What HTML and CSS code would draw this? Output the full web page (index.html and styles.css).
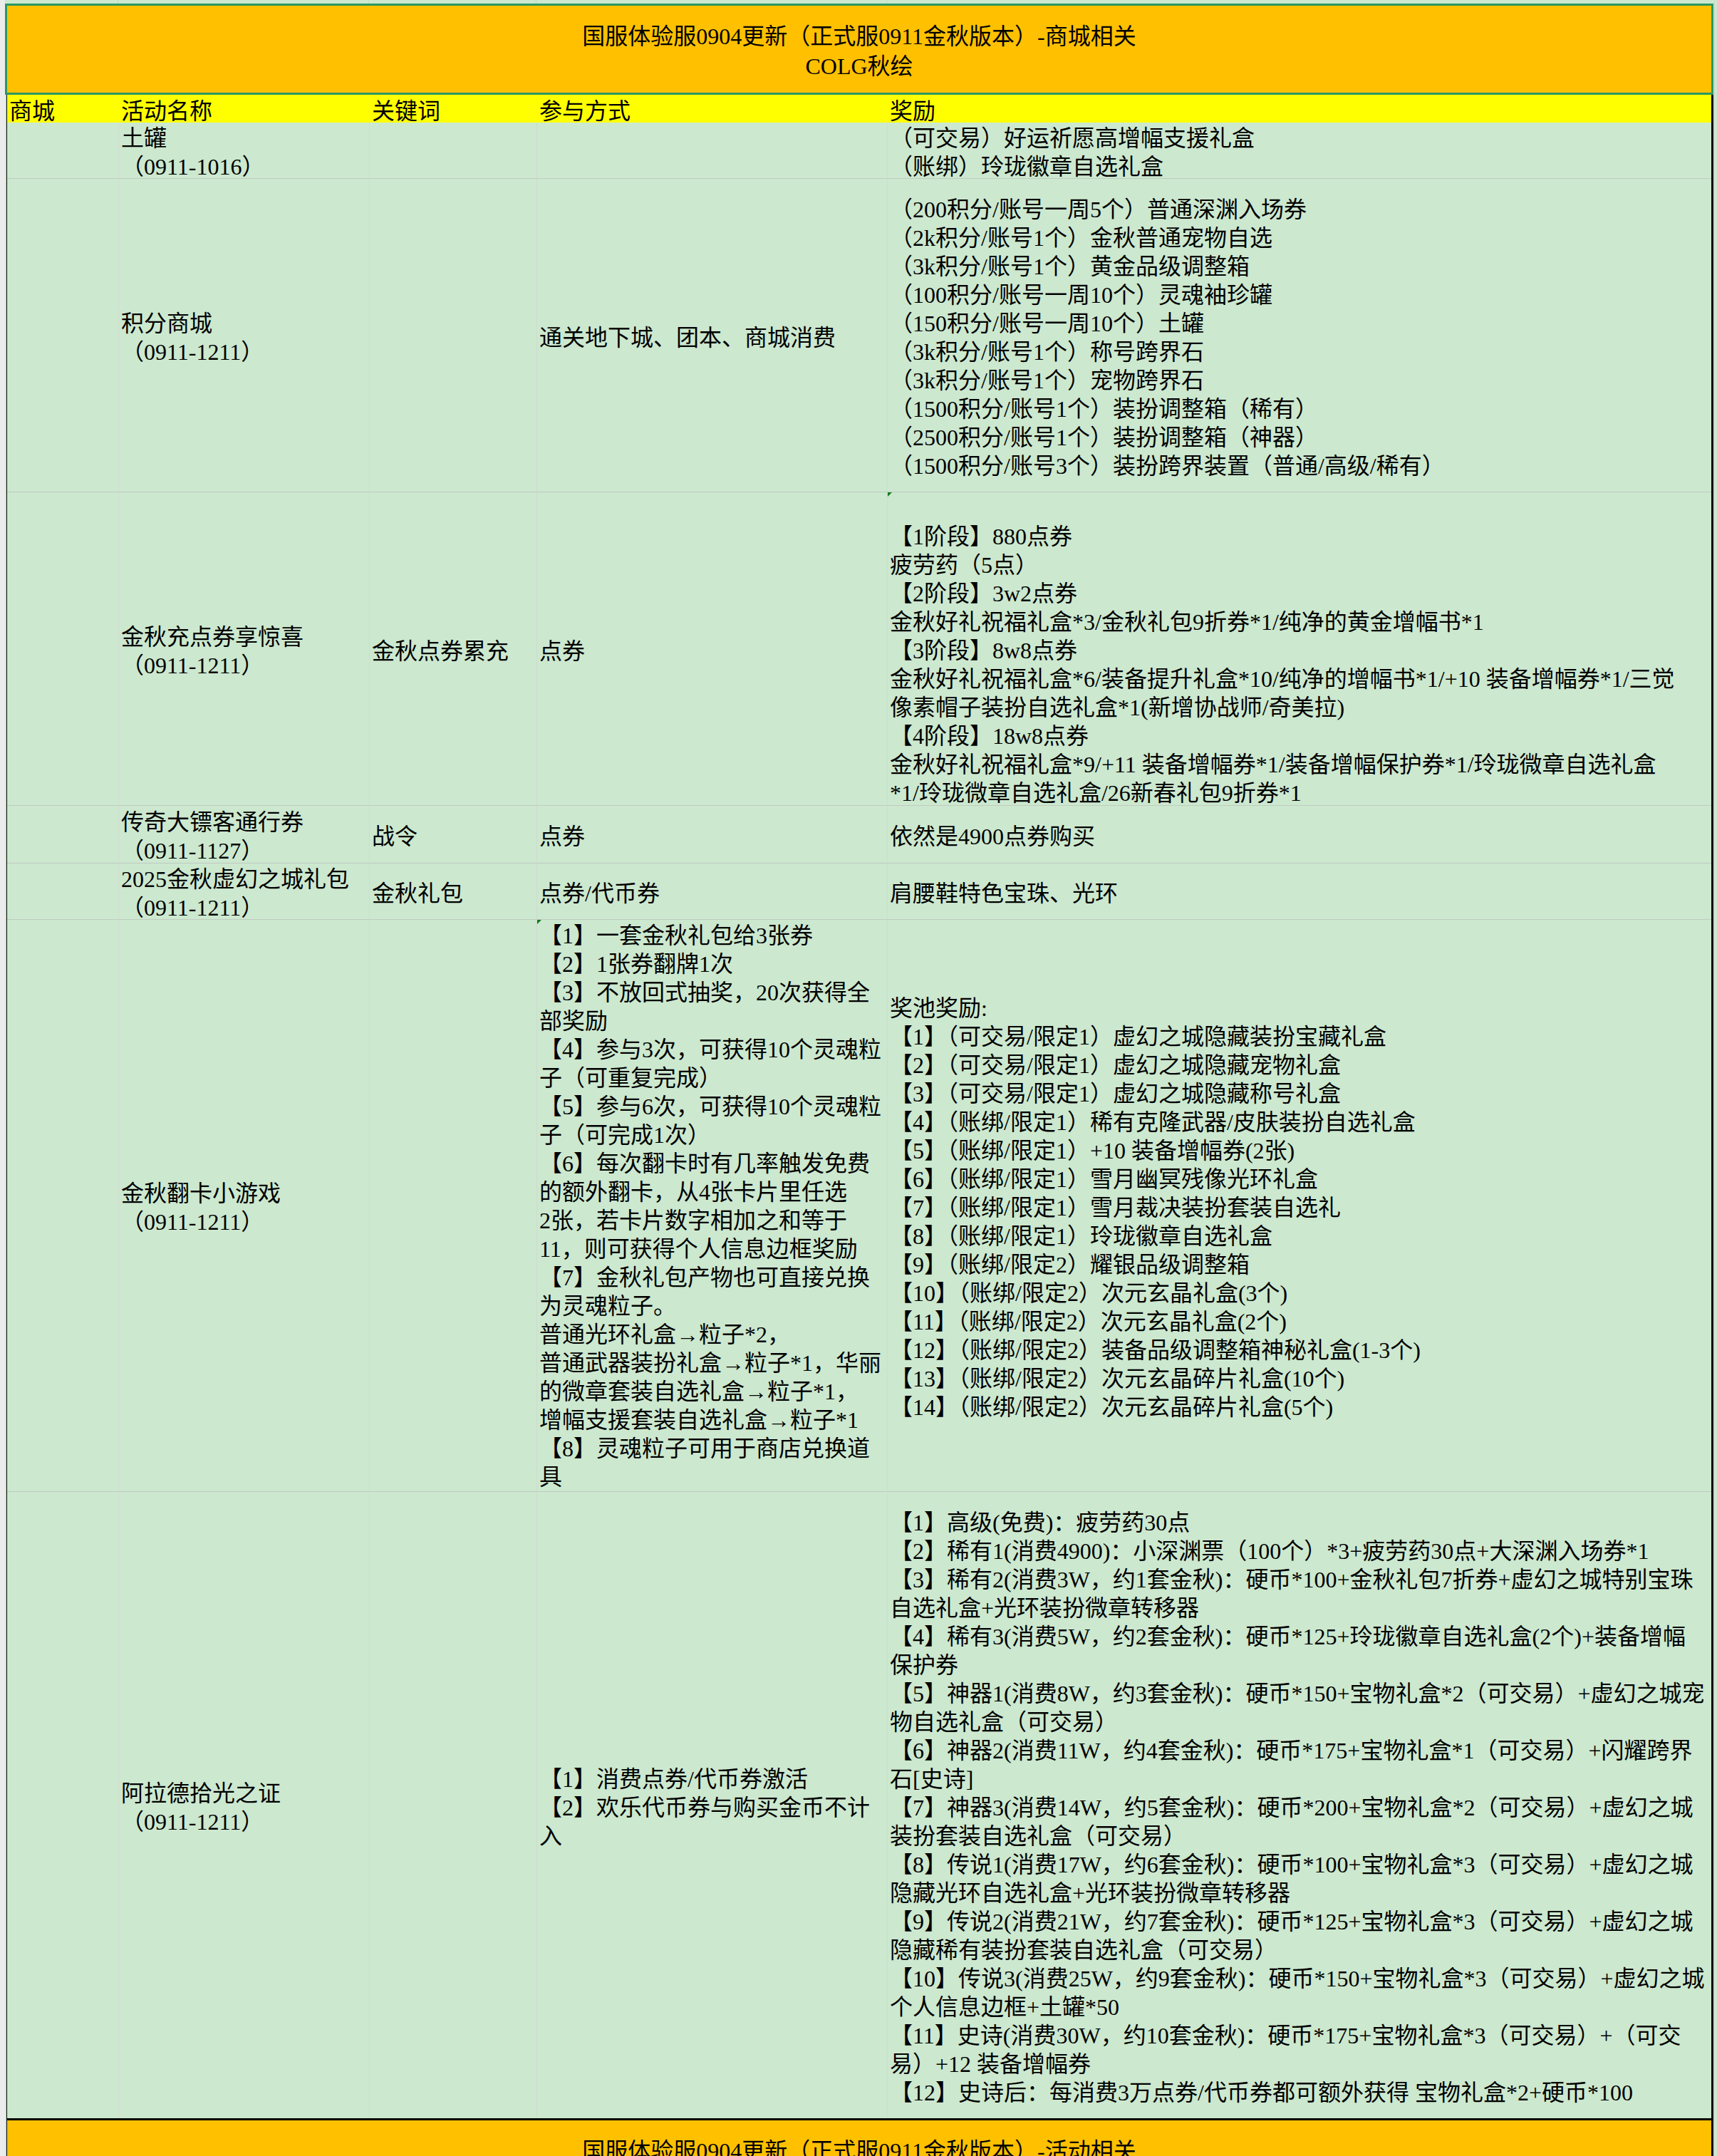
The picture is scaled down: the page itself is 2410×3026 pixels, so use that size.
FILE: index.html
```html
<!DOCTYPE html>
<html lang="zh-CN">
<head>
<meta charset="utf-8">
<title>商城相关</title>
<link rel="stylesheet" href="styles.css">
</head>
<body>
<div class="sheet">
  <div class="gutter"></div>
  <div class="main">
    <div class="topstrip">
      <div class="ts c1"></div><div class="ts c2"></div><div class="ts c3"></div><div class="ts c4"></div><div class="ts c5"></div>
    </div>
    <div class="banner">
      <div class="banner-text">国服体验服0904更新（正式服0911金秋版本）-商城相关<br>COLG秋绘</div>
    </div>
    <div class="table">
      <div class="grid">
        <div class="hd">商城</div>
        <div class="hd">活动名称</div>
        <div class="hd">关键词</div>
        <div class="hd">参与方式</div>
        <div class="hd">奖励</div>

        <div class="cell"></div>
        <div class="cell"><div>土罐<br>（0911-1016）</div></div>
        <div class="cell"></div>
        <div class="cell"></div>
        <div class="cell last"><div>（可交易）好运祈愿高增幅支援礼盒<br>（账绑）玲珑徽章自选礼盒</div></div>

        <div class="cell"></div>
        <div class="cell"><div>积分商城<br>（0911-1211）</div></div>
        <div class="cell"></div>
        <div class="cell"><div>通关地下城、团本、商城消费</div></div>
        <div class="cell last"><div>（200积分/账号一周5个）普通深渊入场券<br>（2k积分/账号1个）金秋普通宠物自选<br>（3k积分/账号1个）黄金品级调整箱<br>（100积分/账号一周10个）灵魂袖珍罐<br>（150积分/账号一周10个）土罐<br>（3k积分/账号1个）称号跨界石<br>（3k积分/账号1个）宠物跨界石<br>（1500积分/账号1个）装扮调整箱（稀有）<br>（2500积分/账号1个）装扮调整箱（神器）<br>（1500积分/账号3个）装扮跨界装置（普通/高级/稀有）</div></div>

        <div class="cell"></div>
        <div class="cell"><div>金秋充点券享惊喜<br>（0911-1211）</div></div>
        <div class="cell"><div>金秋点券累充</div></div>
        <div class="cell"><div>点券</div></div>
        <div class="cell last tall"><span class="flag"></span><div><br>【1阶段】880点券<br>疲劳药（5点）<br>【2阶段】3w2点券<br>金秋好礼祝福礼盒*3/金秋礼包9折券*1/纯净的黄金增幅书*1<br>【3阶段】8w8点券<br>金秋好礼祝福礼盒*6/装备提升礼盒*10/纯净的增幅书*1/+10 装备增幅券*1/三觉<br>像素帽子装扮自选礼盒*1(新增协战师/奇美拉)<br>【4阶段】18w8点券<br>金秋好礼祝福礼盒*9/+11 装备增幅券*1/装备增幅保护券*1/玲珑微章自选礼盒<br>*1/玲珑微章自选礼盒/26新春礼包9折券*1</div></div>

        <div class="cell"></div>
        <div class="cell"><div>传奇大镖客通行券<br>（0911-1127）</div></div>
        <div class="cell"><div>战令</div></div>
        <div class="cell"><div>点券</div></div>
        <div class="cell last"><div>依然是4900点券购买</div></div>

        <div class="cell"></div>
        <div class="cell"><div>2025金秋虚幻之城礼包<br>（0911-1211）</div></div>
        <div class="cell"><div>金秋礼包</div></div>
        <div class="cell"><div>点券/代币券</div></div>
        <div class="cell last"><div>肩腰鞋特色宝珠、光环</div></div>

        <div class="cell"></div>
        <div class="cell"><div>金秋翻卡小游戏<br>（0911-1211）</div></div>
        <div class="cell"></div>
        <div class="cell tall"><span class="flag"></span><div>【1】一套金秋礼包给3张券<br>【2】1张券翻牌1次<br>【3】不放回式抽奖，20次获得全<br>部奖励<br>【4】参与3次，可获得10个灵魂粒<br>子（可重复完成）<br>【5】参与6次，可获得10个灵魂粒<br>子（可完成1次）<br>【6】每次翻卡时有几率触发免费<br>的额外翻卡，从4张卡片里任选<br>2张，若卡片数字相加之和等于<br>11，则可获得个人信息边框奖励<br>【7】金秋礼包产物也可直接兑换<br>为灵魂粒子。<br>普通光环礼盒→粒子*2，<br>普通武器装扮礼盒→粒子*1，华丽<br>的微章套装自选礼盒→粒子*1，<br>增幅支援套装自选礼盒→粒子*1<br>【8】灵魂粒子可用于商店兑换道<br>具</div></div>
        <div class="cell last"><div>奖池奖励:<br>【1】（可交易/限定1）虚幻之城隐藏装扮宝藏礼盒<br>【2】（可交易/限定1）虚幻之城隐藏宠物礼盒<br>【3】（可交易/限定1）虚幻之城隐藏称号礼盒<br>【4】（账绑/限定1）稀有克隆武器/皮肤装扮自选礼盒<br>【5】（账绑/限定1）+10 装备增幅券(2张)<br>【6】（账绑/限定1）雪月幽冥残像光环礼盒<br>【7】（账绑/限定1）雪月裁决装扮套装自选礼<br>【8】（账绑/限定1）玲珑徽章自选礼盒<br>【9】（账绑/限定2）耀银品级调整箱<br>【10】（账绑/限定2）次元玄晶礼盒(3个)<br>【11】（账绑/限定2）次元玄晶礼盒(2个)<br>【12】（账绑/限定2）装备品级调整箱神秘礼盒(1-3个)<br>【13】（账绑/限定2）次元玄晶碎片礼盒(10个)<br>【14】（账绑/限定2）次元玄晶碎片礼盒(5个)</div></div>

        <div class="cell end"></div>
        <div class="cell end"><div>阿拉德拾光之证<br>（0911-1211）</div></div>
        <div class="cell end"></div>
        <div class="cell end"><div>【1】消费点券/代币券激活<br>【2】欢乐代币券与购买金币不计<br>入</div></div>
        <div class="cell end last"><div>【1】高级(免费)：疲劳药30点<br>【2】稀有1(消费4900)：小深渊票（100个）*3+疲劳药30点+大深渊入场券*1<br>【3】稀有2(消费3W，约1套金秋)：硬币*100+金秋礼包7折券+虚幻之城特别宝珠<br>自选礼盒+光环装扮微章转移器<br>【4】稀有3(消费5W，约2套金秋)：硬币*125+玲珑徽章自选礼盒(2个)+装备增幅<br>保护券<br>【5】神器1(消费8W，约3套金秋)：硬币*150+宝物礼盒*2（可交易）+虚幻之城宠<br>物自选礼盒（可交易）<br>【6】神器2(消费11W，约4套金秋)：硬币*175+宝物礼盒*1（可交易）+闪耀跨界<br>石[史诗]<br>【7】神器3(消费14W，约5套金秋)：硬币*200+宝物礼盒*2（可交易）+虚幻之城<br>装扮套装自选礼盒（可交易）<br>【8】传说1(消费17W，约6套金秋)：硬币*100+宝物礼盒*3（可交易）+虚幻之城<br>隐藏光环自选礼盒+光环装扮微章转移器<br>【9】传说2(消费21W，约7套金秋)：硬币*125+宝物礼盒*3（可交易）+虚幻之城<br>隐藏稀有装扮套装自选礼盒（可交易）<br>【10】传说3(消费25W，约9套金秋)：硬币*150+宝物礼盒*3（可交易）+虚幻之城<br>个人信息边框+土罐*50<br>【11】史诗(消费30W，约10套金秋)：硬币*175+宝物礼盒*3（可交易）+（可交<br>易）+12 装备增幅券<br>【12】史诗后：每消费3万点券/代币券都可额外获得 宝物礼盒*2+硬币*100</div></div>
      </div>
      <div class="banner2">
        <div class="banner-text">国服体验服0904更新（正式服0911金秋版本）-活动相关</div>
      </div>
    </div>
  </div>
  <div class="rstrip"></div>
</div>
</body>
</html>
```

FILE: styles.css
```css
html, body {
  margin: 0;
  padding: 0;
}
body {
  background: #cce8cf;
  font-family: "Liberation Serif", "Noto Sans CJK SC", serif;
  font-size: 32px;
  line-height: 40px;
  color: #000;
  overflow: hidden;
}
.sheet {
  display: flex;
  align-items: flex-start;
  width: 2410px;
  height: 3026px;
  overflow: hidden;
}
.gutter {
  width: 7px;
  height: 3026px;
  flex: none;
  background: #ececec;
}
.main {
  width: 2398px;
  flex: none;
  display: flex;
  flex-direction: column;
}
.rstrip {
  width: 5px;
  height: 3026px;
  flex: none;
  background: #cce8cf;
  border-left: 1px solid #c6d2c7;
  box-sizing: border-box;
  margin-left: 1px;
}
.topstrip {
  flex: none;
  height: 5px;
  display: grid;
  grid-template-columns: 159px 352px 235px 492px 1160px;
  background: #cce8cf;
}
.ts {
  border-right: 1px solid #c9d6ca;
}
.ts.c5 {
  border-right: none;
}
.banner {
  flex: none;
  height: 128px;
  box-sizing: border-box;
  border: 3px solid #2b9862;
  background: #ffc000;
  padding-top: 22px;
}
.banner-text {
  text-align: center;
  line-height: 42px;
  white-space: nowrap;
}
.table {
  flex: none;
  margin-left: 2px;
  border-left: 1px solid #000;
  border-right: 3px solid #000;
  width: 2396px;
  box-sizing: border-box;
  display: flex;
  flex-direction: column;
}
.grid {
  flex: none;
  display: grid;
  grid-template-columns: 157px 352px 235px 492px 1156px;
  grid-template-rows: 39px 79px 440px 440px 81px 79px 803px 879px;
}
.hd {
  background: #ffff00;
  padding: 0 3px;
  line-height: 32px;
  display: flex;
  align-items: flex-end;
  white-space: nowrap;
}
.cell {
  position: relative;
  box-sizing: border-box;
  border-right: 1px solid #d0dcd1;
  border-bottom: 1px solid #bfcac0;
  background: #cce8cf;
  display: flex;
  align-items: center;
  padding: 6px 3px 0 3px;
  white-space: nowrap;
}
.cell.tall {
  padding-top: 2px;
  align-items: flex-start;
}
.cell.last {
  border-right: none;
}
.cell.end {
  border-bottom: none;
}
.flag {
  position: absolute;
  left: 0;
  top: 0;
  width: 0;
  height: 0;
  border-top: 6px solid #137a1c;
  border-right: 6px solid transparent;
}
.banner2 {
  flex: none;
  box-sizing: border-box;
  border-top: 3px solid #000;
  background: #ffc000;
  height: 128px;
  padding-top: 22px;
}
```
